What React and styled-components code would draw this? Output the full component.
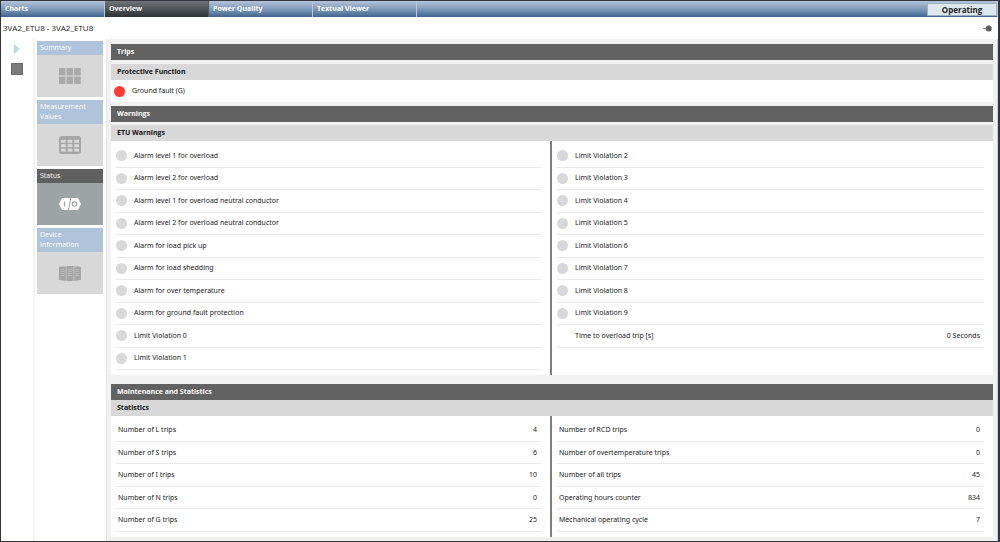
import React, { useState } from 'react';
import styled, { createGlobalStyle } from 'styled-components';

const GlobalStyle = createGlobalStyle`
  * {
    box-sizing: border-box;
  }

  body {
    margin: 0;
    background: #fff;
    color: #222;
    font-family: 'Open Sans', 'Noto Sans', sans-serif;
    font-size: 7px;
    line-height: 10px;
  }

  button {
    margin: 0;
    padding: 0;
    border: none;
    background: none;
    font: inherit;
    cursor: pointer;
  }

  svg {
    display: block;
  }
`;

const Window = styled.div`
  display: flex;
  flex-direction: column;
  min-height: 100vh;
  border: 1px solid #35353f;
  border-right: 2px solid #2f3545;
`;

const TopBar = styled.nav`
  display: flex;
  height: 16px;
  background: linear-gradient(#b4c4da, #7f9bbb 50%, #40648c);
  border-right: 1px solid #c5d0da;
`;

const Tab = styled.button`
  width: 104px;
  padding-left: 4px;
  text-align: left;
  color: #fff;
  font-weight: 700;
  line-height: 14px;
  border-right: 1px solid ${(props) => (props.$active ? '#555' : '#b9c8da')};
  background: ${(props) => (props.$active ? 'linear-gradient(#70757a, #2d3234)' : 'none')};
`;

const Operating = styled.button`
  width: 70px;
  height: 13px;
  margin: 2px 0 0 auto;
  border: 1px solid #a0b0bb;
  background: #dce8ee;
  color: #222;
  font-size: 8px;
  font-weight: 700;
  line-height: 11px;
`;

const TitleBar = styled.header`
  display: flex;
  align-items: center;
  justify-content: space-between;
  height: 22px;
  padding: 0 6px 0 2px;
`;

const DeviceName = styled.h1`
  margin: 0;
  font-size: 8px;
  font-weight: 400;
`;

const Body = styled.div`
  display: flex;
  flex: 1;
  border-right: 1px solid #c9d0d8;
`;

const Controls = styled.div`
  display: flex;
  flex-direction: column;
  align-items: center;
  gap: 9px;
  width: 34px;
  padding-top: 5px;
  border-right: 2px solid #f2f2f2;
`;

const Sidebar = styled.nav`
  display: flex;
  flex-direction: column;
  gap: 3px;
  width: 71px;
  padding: 2px 3px 0 2px;
`;

const TileButton = styled.button`
  display: block;
  width: 100%;
`;

const TileTitle = styled.span`
  display: block;
  padding: 2px 3px;
  background: ${(props) => (props.$active ? '#606060' : '#afc4da')};
  color: #fff;
  text-align: left;
`;

const TileIcon = styled.span`
  display: flex;
  align-items: center;
  justify-content: center;
  height: 42px;
  background: ${(props) => (props.$active ? '#9ea4a6' : '#d8d8d8')};
`;

const Main = styled.main`
  display: flex;
  flex-direction: column;
  flex: 1;
  padding: 5px 4px 3px;
  border-left: 1px solid #e6e6e6;
  background: #f1f1f1;
`;

const Section = styled.section`
  margin-bottom: ${(props) => props.$space || 0}px;
`;

const SectionTitle = styled.h2`
  margin: 0 0 ${(props) => props.$space || 0}px;
  padding: 0 6px;
  background: #626262;
  color: #fff;
  font-size: 7px;
  line-height: 16px;
`;

const GroupTitle = styled.h3`
  margin: 0;
  padding: 0 6px;
  background: #d8d8d8;
  color: #111;
  font-size: 7px;
  line-height: 16px;
`;

const Columns = styled.div`
  display: grid;
  grid-template-columns: 1fr 1fr;
  background: #fff;
  font-family: 'Noto Sans', 'Open Sans', sans-serif;
`;

const Column = styled.div`
  padding: 4px 9px 5px 5px;

  &:first-child {
    border-right: 2px solid #7d7d7d;
  }
`;

const AlarmList = styled.ul`
  display: grid;
  grid-template-rows: repeat(10, 1fr);
  height: 225px;
  margin: 0;
  padding: 0;
  list-style: none;
`;

const AlarmRow = styled.li`
  display: flex;
  align-items: center;
  gap: 7px;
  padding-right: 4px;
  border-bottom: 1px solid #e8e8e8;
`;

const Lamp = styled.span`
  flex: none;
  width: 11px;
  height: 11px;
  border-radius: 50%;
  background: ${(props) => props.$color || '#d8d8d8'};
`;

const RowValue = styled.span`
  margin-left: auto;
`;

const TripRow = styled.div`
  display: flex;
  align-items: center;
  gap: 7px;
  height: 22px;
  padding: 0 3px;
  background: #fff;
  font-family: 'Noto Sans', 'Open Sans', sans-serif;
`;

const StatTable = styled.table`
  width: 100%;
  height: 112px;
  border-collapse: collapse;

  th,
  td {
    padding: 0 4px 0 2px;
    border-bottom: 1px solid #e8e8e8;
    font-weight: 400;
    text-align: left;
  }

  td {
    text-align: right;
  }
`;

const tabs = ['Charts', 'Overview', 'Power Quality', 'Textual Viewer'];

const alarmsLeft = [
  'Alarm level 1 for overload',
  'Alarm level 2 for overload',
  'Alarm level 1 for overload neutral conductor',
  'Alarm level 2 for overload neutral conductor',
  'Alarm for load pick up',
  'Alarm for load shedding',
  'Alarm for over temperature',
  'Alarm for ground fault protection',
  'Limit Violation 0',
  'Limit Violation 1',
];

const alarmsRight = [2, 3, 4, 5, 6, 7, 8, 9].map((n) => `Limit Violation ${n}`);

const statsLeft = [
  ['Number of L trips', 4],
  ['Number of S trips', 6],
  ['Number of I trips', 10],
  ['Number of N trips', 0],
  ['Number of G trips', 25],
];

const statsRight = [
  ['Number of RCD trips', 0],
  ['Number of overtemperature trips', 0],
  ['Number of all trips', 45],
  ['Operating hours counter', 834],
  ['Mechanical operating cycle', 7],
];

const SummaryIcon = () => (
  <svg width="22" height="16" viewBox="0 0 22 16" fill="#a9a9a9">
    {[0, 7.6, 15.2].map((x) =>
      [0, 8.6].map((y) => <rect key={`${x}-${y}`} x={x} y={y} width="6.5" height="7.4" />)
    )}
  </svg>
);

const TableIcon = () => (
  <svg width="22" height="18" viewBox="0 0 22 18">
    <rect width="22" height="18" rx="3" fill="#a6a6a6" />
    {[2, 8.6, 15.2].map((x) =>
      [3.8, 8.2, 12.6].map((y) => <rect key={`${x}-${y}`} x={x} y={y} width="4.8" height="3" fill="#d8d8d8" />)
    )}
  </svg>
);

const StatusIcon = () => (
  <svg width="22" height="12" viewBox="0 0 22 12">
    <path d="M3 0H11.3L9 12H3L0 6Z" fill="#fff" />
    <path d="M12.3 0H19L22 6L19 12H10Z" fill="#fff" />
    <path d="M5.5 3.5V8.5" stroke="#9ea4a6" strokeWidth="1.2" />
    <circle cx="15.5" cy="6" r="2.2" fill="none" stroke="#9ea4a6" strokeWidth="1.2" />
  </svg>
);

const DeviceIcon = () => (
  <svg width="22" height="15" viewBox="0 0 22 15">
    <path d="M0 1.3L1 0.5H6.8V15L0 14ZM7.4 0H14.6V15H7.4ZM15.2 0.5H21L22 1.3V14L15.2 15Z" fill="#a6a6a6" />
    <path
      d="M2 3.5H5.3M2 5.5H5.3M2 7.5H5.3M2 9.5H5.3M9.3 3.5H12.7M9.3 5.5H12.7M9.3 7.5H12.7M9.3 9.5H12.7M16.7 3.5H20M16.7 5.5H20M16.7 7.5H20M16.7 9.5H20"
      stroke="#bcbcbc"
    />
  </svg>
);

const tiles = [
  { name: 'Summary', icon: <SummaryIcon /> },
  { name: 'Measurement Values', icon: <TableIcon /> },
  { name: 'Status', icon: <StatusIcon /> },
  { name: 'Device Information', icon: <DeviceIcon /> },
];

const Alarm = ({ label }) => (
  <AlarmRow>
    <Lamp />
    {label}
  </AlarmRow>
);

const Stats = ({ rows }) => (
  <StatTable>
    <tbody>
      {rows.map(([label, value]) => (
        <tr key={label}>
          <th scope="row">{label}</th>
          <td>{value}</td>
        </tr>
      ))}
    </tbody>
  </StatTable>
);

const App = () => {
  const [tab, setTab] = useState('Overview');
  const [tile, setTile] = useState('Status');

  return (
    <Window>
      <GlobalStyle />
      <TopBar>
        {tabs.map((name) => (
          <Tab key={name} $active={name === tab} onClick={() => setTab(name)}>
            {name}
          </Tab>
        ))}
        <Operating>Operating</Operating>
      </TopBar>
      <TitleBar>
        <DeviceName>3VA2_ETU8 - 3VA2_ETU8</DeviceName>
        <button aria-label="Pin">
          <svg width="9" height="7" viewBox="0 0 9 7">
            <path d="M0 3.5H4" stroke="#888" />
            <circle cx="5.7" cy="3.5" r="3" fill="#606060" />
          </svg>
        </button>
      </TitleBar>
      <Body>
        <Controls>
          <button aria-label="Start">
            <svg width="6" height="10" viewBox="0 0 6 10">
              <path d="M0 0L6 5L0 10Z" fill="#b5dce0" />
            </svg>
          </button>
          <button aria-label="Stop">
            <svg width="12" height="12" viewBox="0 0 12 12">
              <rect x="0.5" y="0.5" width="11" height="11" fill="#7b7b7b" stroke="#6b6b6b" />
            </svg>
          </button>
        </Controls>
        <Sidebar>
          {tiles.map(({ name, icon }) => (
            <TileButton key={name} onClick={() => setTile(name)}>
              <TileTitle $active={name === tile}>{name}</TileTitle>
              <TileIcon $active={name === tile}>{icon}</TileIcon>
            </TileButton>
          ))}
        </Sidebar>
        <Main>
          <Section $space={4}>
            <SectionTitle $space={4}>Trips</SectionTitle>
            <GroupTitle>Protective Function</GroupTitle>
            <TripRow>
              <Lamp $color="#ff3b30" />
              Ground fault (G)
            </TripRow>
          </Section>
          <Section $space={9}>
            <SectionTitle $space={3}>Warnings</SectionTitle>
            <GroupTitle>ETU Warnings</GroupTitle>
            <Columns>
              <Column>
                <AlarmList>
                  {alarmsLeft.map((label) => (
                    <Alarm key={label} label={label} />
                  ))}
                </AlarmList>
              </Column>
              <Column>
                <AlarmList>
                  {alarmsRight.map((label) => (
                    <Alarm key={label} label={label} />
                  ))}
                  <AlarmRow>
                    <Lamp $color="transparent" />
                    Time to overload trip [s]
                    <RowValue>0 Seconds</RowValue>
                  </AlarmRow>
                </AlarmList>
              </Column>
            </Columns>
          </Section>
          <Section>
            <SectionTitle>Maintenance and Statistics</SectionTitle>
            <GroupTitle>Statistics</GroupTitle>
            <Columns>
              <Column>
                <Stats rows={statsLeft} />
              </Column>
              <Column>
                <Stats rows={statsRight} />
              </Column>
            </Columns>
          </Section>
        </Main>
      </Body>
    </Window>
  );
};

export default App;
